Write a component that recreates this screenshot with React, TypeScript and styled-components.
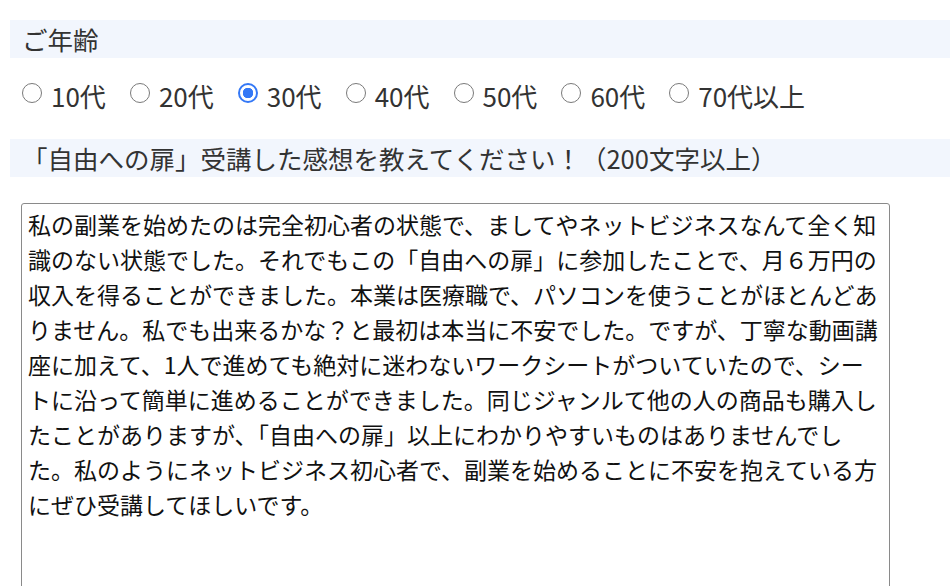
import { useState } from "react"
import styled, { createGlobalStyle } from "styled-components"

const GlobalStyle = createGlobalStyle`
  html, body {
    margin: 0;
    padding: 0;
    background: #ffffff;
    overflow: hidden;
  }
  body {
    font-family: "Noto Sans CJK JP", "Noto Sans", sans-serif;
    color: #333333;
  }
`

const Form = styled.form`
  padding: 20px 0 0 10px;
  display: flex;
  flex-direction: column;
`

const SectionTitle = styled.div`
  background: #f2f6fd;
  height: 38px;
  display: flex;
  align-items: center;
  padding-left: 12px;
  font-size: 25.5px;
  line-height: 1;
  color: #333333;
`

const RadioRow = styled.div`
  display: flex;
  align-items: center;
  gap: 24px;
  padding: 22px 0 27px 12px;
  height: 32px;
`

const RadioLabel = styled.label`
  display: flex;
  align-items: center;
  gap: 9px;
  font-size: 26px;
  line-height: 1;
  color: #333333;
  cursor: pointer;
`

const RadioInput = styled.input`
  appearance: none;
  margin: 0;
  width: 20px;
  height: 20px;
  border: 1.5px solid #7a7a7a;
  border-radius: 50%;
  background: #ffffff;
  box-sizing: border-box;
  position: relative;
  top: -3px;
  flex-shrink: 0;

  &:checked {
    border: 2px solid #3478f6;
    background: radial-gradient(circle, #3478f6 0 5px, #ffffff 5.5px);
  }
`

const AnswerBox = styled.textarea`
  margin: 26px 0 0 11px;
  width: 869px;
  height: 420px;
  box-sizing: border-box;
  border: 1px solid #8a8a8a;
  border-radius: 3px;
  padding: 3px 6px;
  font-family: "Noto Sans CJK JP", "Noto Sans", sans-serif;
  font-size: 23px;
  line-height: 35px;
  color: #111111;
  resize: none;
  outline: none;
  overflow: hidden;
`

const ages = ["10代", "20代", "30代", "40代", "50代", "60代", "70代以上"]

const impression =
  "私の副業を始めたのは完全初心者の状態で、ましてやネットビジネスなんて全く知識のない状態でした。それでもこの「自由への扉」に参加したことで、月６万円の収入を得ることができました。本業は医療職で、パソコンを使うことがほとんどありません。私でも出来るかな？と最初は本当に不安でした。ですが、丁寧な動画講座に加えて、1人で進めても絶対に迷わないワークシートがついていたので、シートに沿って簡単に進めることができました。同じジャンルて他の人の商品も購入したことがありますが、「自由への扉」以上にわかりやすいものはありませんでした。私のようにネットビジネス初心者で、副業を始めることに不安を抱えている方にぜひ受講してほしいです。"

export default function App() {
  const [age, setAge] = useState("30代")
  const [text, setText] = useState(impression)

  return (
    <>
      <GlobalStyle />
      <Form onSubmit={(e) => e.preventDefault()}>
        <SectionTitle>ご年齢</SectionTitle>
        <RadioRow>
          {ages.map((a) => (
            <RadioLabel key={a}>
              <RadioInput
                type="radio"
                name="age"
                value={a}
                checked={age === a}
                onChange={() => setAge(a)}
              />
              {a}
            </RadioLabel>
          ))}
        </RadioRow>
        <SectionTitle>「自由への扉」受講した感想を教えてください！（200文字以上）</SectionTitle>
        <AnswerBox value={text} onChange={(e) => setText(e.target.value)} />
      </Form>
    </>
  )
}
